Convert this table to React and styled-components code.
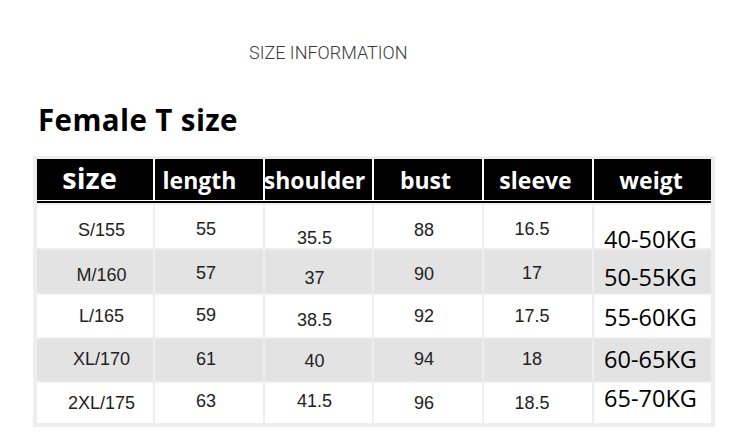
import React from "react";
import styled, { createGlobalStyle } from "styled-components";

const GlobalStyle = createGlobalStyle`
  html, body { margin: 0; padding: 0; background: #fff; }
  #root { width: 750px; height: 438px; }
`;

const COLS = "116px 108px 107px 108px 108px 117px";

const Page = styled.div`
  width: 750px;
  height: 438px;
  overflow: hidden;
  background: #fff;
  display: flex;
  flex-direction: column;
  align-items: flex-start;
`;

const Caption = styled.div`
  margin: 43px 0 0 249px;
  font-family: Roboto, "Liberation Sans", sans-serif;
  font-weight: 300;
  font-size: 18px;
  line-height: 20px;
  color: #3a3a3a;
  white-space: nowrap;
`;

const Title = styled.h1`
  margin: 38px 0 0 38px;
  font-family: "Open Sans", "Noto Sans", sans-serif;
  font-weight: 700;
  font-size: 29.5px;
  letter-spacing: 0.4px;
  line-height: 38px;
  color: #000;
  white-space: nowrap;
`;

const Table = styled.div`
  margin: 17px 0 0 33px;
  padding: 3px 4px 4px 4px;
  background: #eeeeee;
  display: flex;
  flex-direction: column;
  gap: 2px;
`;

const HeaderRow = styled.div`
  display: grid;
  grid-template-columns: ${COLS};
  grid-template-rows: 41px;
  column-gap: 2px;
  background: #fff;
  padding-bottom: 1px;
  border-bottom: 2px solid #000;
`;

const Row = styled.div`
  display: grid;
  grid-template-columns: ${COLS};
  grid-template-rows: ${(p) => p.$h}px;
  column-gap: 2px;
`;

const shift = (dx = 0, dy = 0) => `
  padding-left: ${Math.max(0, dx * 2)}px;
  padding-right: ${Math.max(0, -dx * 2)}px;
  padding-top: ${Math.max(0, dy * 2)}px;
  padding-bottom: ${Math.max(0, -dy * 2)}px;
`;

const HeadCell = styled.div`
  box-sizing: border-box;
  min-height: 0;
  background: #000;
  color: #fff;
  display: flex;
  align-items: center;
  justify-content: center;
  white-space: nowrap;
  font-family: "Open Sans", "Noto Sans", sans-serif;
  font-weight: 700;
  font-size: ${(p) => (p.$big ? 29 : 23)}px;
  line-height: 1;
  ${(p) => shift(p.$dx, p.$dy)}
`;

const Cell = styled.div`
  box-sizing: border-box;
  min-height: 0;
  background: ${(p) => (p.$alt ? "#e3e3e3" : "#fff")};
  display: flex;
  align-items: center;
  justify-content: center;
  white-space: nowrap;
  font-family: ${(p) =>
    p.$kg ? `"Open Sans", "Noto Sans", sans-serif` : `"Liberation Sans", Arial, sans-serif`};
  font-size: ${(p) => (p.$kg ? 23.5 : 18)}px;
  line-height: 1;
  color: ${(p) => (p.$kg ? "#000" : "#222")};
  ${(p) => shift(p.$dx, p.$dy)}
`;

const headers = ["size", "length", "shoulder", "bust", "sleeve", "weigt"];
const headDx = [-5.5, -9.5, -4, -2.5, -2.5, -1.5];
const bodyDx = [6.5, -3, -4, -4, -6, -2];

const rows = [
  { h: 43, cells: ["S/155", "55", "35.5", "88", "16.5", "40-50KG"], dy: [3, 2, 11, 3, 2.5, 13] },
  { h: 43, cells: ["M/160", "57", "37", "90", "17", "50-55KG"], dy: [3, 1, 6, 2.5, 1, 6] },
  { h: 42, cells: ["L/165", "59", "38.5", "92", "17.5", "55-60KG"], dy: [-0.5, -1, 3.5, -0.5, -0.5, 2] },
  { h: 42, cells: ["XL/170", "61", "40", "94", "18", "60-65KG"], dy: [-1.5, -1.5, 0.5, -1.5, -1.5, 0] },
  { h: 40, cells: ["2XL/175", "63", "41.5", "96", "18.5", "65-70KG"], dy: [-0.5, -2, -2, -0.5, -0.5, -4] },
];

export default function App() {
  return (
    <>
      <GlobalStyle />
      <Page>
        <Caption>SIZE INFORMATION</Caption>
        <Title>Female T size</Title>
        <Table>
          <HeaderRow>
            {headers.map((h, i) => (
              <HeadCell key={h} $big={i === 0} $dx={headDx[i]} $dy={i === 0 ? -2 : 1}>
                {h}
              </HeadCell>
            ))}
          </HeaderRow>
          {rows.map((r, ri) => (
            <Row key={ri} $h={r.h}>
              {r.cells.map((c, ci) => (
                <Cell
                  key={ci}
                  $alt={ri % 2 === 1}
                  $kg={ci === 5}
                  $dx={bodyDx[ci]}
                  $dy={r.dy[ci]}
                >
                  {c}
                </Cell>
              ))}
            </Row>
          ))}
        </Table>
      </Page>
    </>
  );
}
